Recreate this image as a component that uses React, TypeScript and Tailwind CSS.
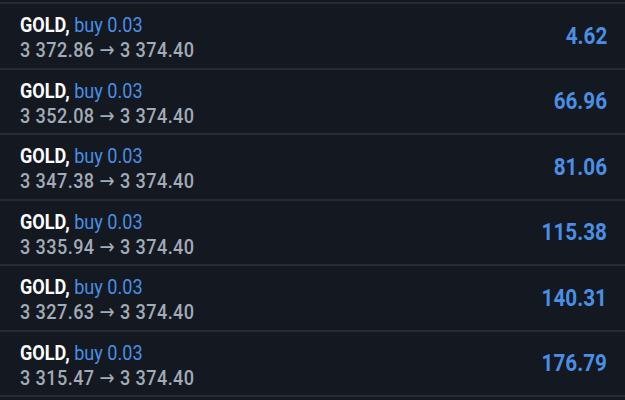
const trades = [
  { open: "3 372.86", close: "3 374.40", profit: "4.62" },
  { open: "3 352.08", close: "3 374.40", profit: "66.96" },
  { open: "3 347.38", close: "3 374.40", profit: "81.06" },
  { open: "3 335.94", close: "3 374.40", profit: "115.38" },
  { open: "3 327.63", close: "3 374.40", profit: "140.31" },
  { open: "3 315.47", close: "3 374.40", profit: "176.79" },
];

function TradeRow({ open, close, profit }: { open: string; close: string; profit: string }) {
  return (
    <div className="flex h-[65.5px] items-center justify-between border-b-2 border-[#262c36] pl-5 pr-[18px]">
      <div className="mt-[5px] origin-left scale-x-[0.86] whitespace-nowrap text-[21px] leading-[25px]">
        <div>
          <span className="font-bold text-white">GOLD,</span>{" "}
          <span className="text-[#4a8fe4]">buy 0.03</span>
        </div>
        <div className="font-medium tracking-[0.5px] text-[#a3abb7]">
          {open} <span className="font-['DejaVu_Sans',sans-serif] font-normal">→</span> {close}
        </div>
      </div>
      <div className="origin-right scale-x-[0.86] text-[24px] font-bold leading-none text-[#4a8fe4]">
        {profit}
      </div>
    </div>
  );
}

export default function App() {
  return (
    <div className="h-[400px] w-[625px] overflow-hidden bg-[#131821] font-['Roboto',sans-serif]">
      <div className="h-[4px] border-b-2 border-[#262c36]" />
      {trades.map((t) => (
        <TradeRow key={t.open} {...t} />
      ))}
    </div>
  );
}
